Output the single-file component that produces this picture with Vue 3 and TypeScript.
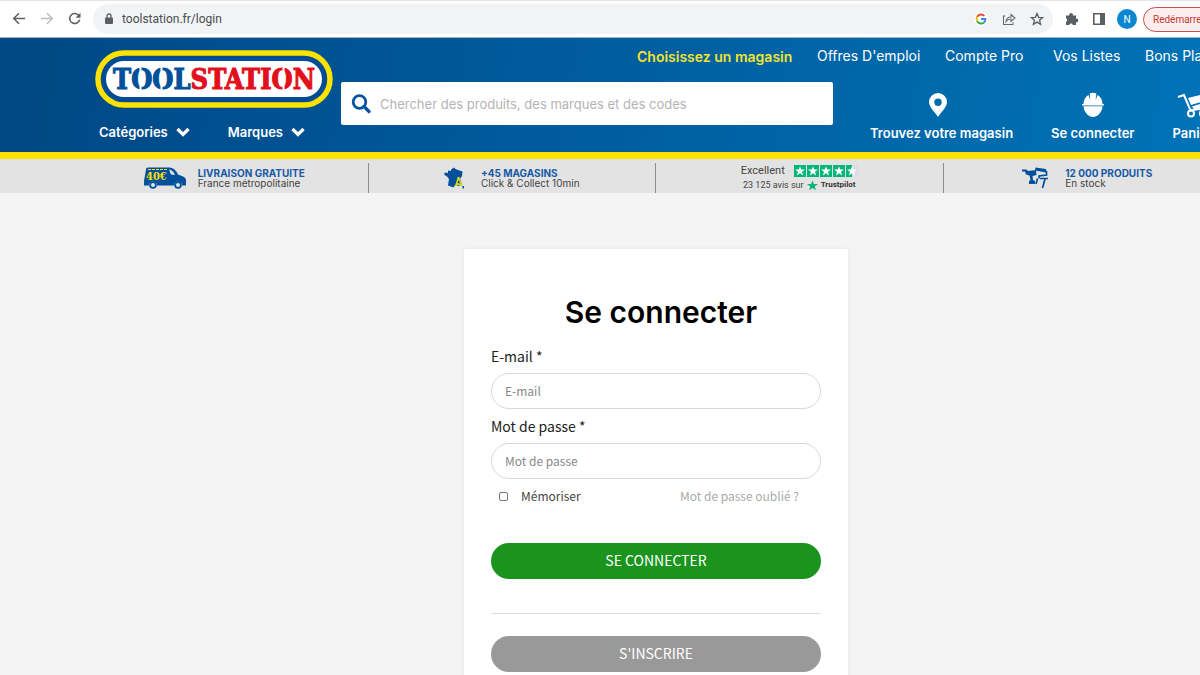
<script setup lang="ts">
import { ref } from 'vue'

const email = ref('')
const password = ref('')
const remember = ref(false)
const search = ref('')
const address = ref('toolstation.fr/login')

const quickLinks: string[] = ["Offres D'emploi", 'Compte Pro', 'Vos Listes', 'Bons Plans']
const menus: string[] = ['Catégories', 'Marques']
const stars: number[] = [0, 1, 2, 3, 4]
const starPath = 'M6 1.2 7.200 4.600H11L8 6.800 9.100 10.400 6 8.200 2.900 10.400 4 6.800 1 4.600H4.800Z'
</script>

<template>
  <div class="viewport">
    <div class="canvas">
      <div class="browser">
        <button class="tool" aria-label="Retour">
          <svg width="16" height="16" viewBox="0 0 16 16"><path d="M14 7.500H3M8 2.200 2.700 7.500 8 12.800" fill="none" stroke="#5b5e62" stroke-width="1.500" /></svg>
        </button>
        <button class="tool" aria-label="Suivant">
          <svg width="16" height="16" viewBox="0 0 16 16"><path d="M2 7.500h11M8 2.200 13.300 7.500 8 12.800" fill="none" stroke="#b9bbbe" stroke-width="1.500" /></svg>
        </button>
        <button class="tool" aria-label="Actualiser">
          <svg width="16" height="16" viewBox="0 0 16 16"><path d="M12.600 8.700A5 5 0 1 1 11.300 4L12.500 5.200" fill="none" stroke="#5b5e62" stroke-width="1.600" /><path d="M13.500 1.800V6.700H8.600Z" fill="#5b5e62" /></svg>
        </button>
        <div class="address">
          <svg class="lock" width="10" height="12" viewBox="0 0 10 12"><path d="M3 5V3a2 2 0 0 1 4 0v2" fill="none" stroke="#5b5e62" stroke-width="1.300" /><rect x="1" y="4.500" width="8" height="6.500" rx="1" fill="#5b5e62" /></svg>
          <input v-model="address" class="url" aria-label="Adresse" />
          <svg width="14" height="14" viewBox="0 0 14 14"><circle cx="7" cy="7" r="7" fill="#fff" /><g fill="none" stroke-width="2"><path d="M10.300 3.900A4.500 4.500 0 0 0 3.100 4.900" stroke="#ea4335" /><path d="M3.100 4.900A4.500 4.500 0 0 0 3.100 9.200" stroke="#fbbc05" /><path d="M3.100 9.200A4.500 4.500 0 0 0 10 10.400" stroke="#34a853" /><path d="M10 10.400A4.500 4.500 0 0 0 11.400 7H7" stroke="#4285f4" /></g></svg>
          <svg width="14" height="14" viewBox="0 0 14 14"><path d="M3.500 4H1.500v8.500h9.500V10.500M4 9.500C4.500 6.500 6.500 5 9 5V2.500L13 6 9 9.400V7C7 7 5.500 7.700 4 9.500Z" fill="none" stroke="#66696d" stroke-width="1.100" /></svg>
          <svg width="14" height="14" viewBox="0 0 14 14"><path d="m7 1.500 1.600 3.800 4.100.3-3.100 2.700 1 4L7 10.100l-3.600 2.200 1-4L1.300 5.600l4.100-.3Z" fill="none" stroke="#5b5e62" stroke-width="1.300" /></svg>
        </div>
        <div class="extensions">
          <svg width="14" height="14" viewBox="0 0 14 14"><path d="M1 3.500h3.300a1.900 1.900 0 1 1 3.600 0H11v3.200a1.800 1.800 0 1 1 0 3.500V13H7.800a1.800 1.800 0 0 0-3.500 0H1V9.700a1.800 1.800 0 0 0 0-3.400Z" fill="#5b5e62" /></svg>
          <svg width="14" height="14" viewBox="0 0 14 14"><path d="M1.800 1.800h10.400v10.400H1.800Z" fill="#fff" stroke="#5b5e62" stroke-width="1.600" /><path d="M8 1h5v12H8Z" fill="#5b5e62" /></svg>
          <button class="avatar">N</button>
          <button class="restart">Redémarrer</button>
        </div>
      </div>

      <header class="header">
        <div class="container head">
          <div class="brand">
            <a href="#" class="logo" aria-label="Toolstation">
              <svg width="238" height="58" viewBox="0 0 238 58">
                <rect x="3" y="3" width="232" height="52" rx="26" fill="#004b93" stroke="#ffe200" stroke-width="5.500" />
                <rect x="11" y="11" width="216" height="36" rx="18" fill="#fff" />
                <text x="119" y="39" text-anchor="middle" class="wordmark"><tspan fill="#00509b" stroke="#00509b">TOOL</tspan><tspan fill="#e2101c" stroke="#e2101c">STATION</tspan></text>
                <path d="M45.500 17v24M66.500 17v24M188.500 17v24" stroke="#fff" stroke-width="2" />
              </svg>
            </a>
            <nav class="menus">
              <button v-for="menu in menus" :key="menu" class="menu">
                {{ menu }}
                <svg width="14" height="10" viewBox="0 0 14 10"><path d="m1.500 2 5.500 5.500L12.500 2" fill="none" stroke="#fff" stroke-width="3.200" /></svg>
              </button>
            </nav>
          </div>
          <div class="panel">
            <nav class="links">
              <a href="#" class="store">Choisissez un magasin</a>
              <a v-for="link in quickLinks" :key="link" href="#">{{ link }}</a>
            </nav>
            <div class="lower">
              <label class="search">
                <svg width="20" height="20" viewBox="0 0 20 20"><circle cx="8.500" cy="8" r="6.300" fill="none" stroke="#0a539e" stroke-width="2.800" /><path d="m13 12.500 5 5" stroke="#0a539e" stroke-width="3.200" stroke-linecap="round" /></svg>
                <input v-model="search" type="search" aria-label="Recherche" placeholder="Chercher des produits, des marques et des codes" />
              </label>
              <nav class="actions">
                <a href="#">
                  <svg width="34" height="26" viewBox="0 0 34 26"><path d="M13 1a9 9 0 0 0-9 9c0 5 5 9 9 15 4-6 9-10 9-15a9 9 0 0 0-9-9Zm0 5.500a3.700 3.700 0 1 1 0 7.400 3.700 3.700 0 0 1 0-7.400Z" fill="#fff" /></svg>
                  Trouvez votre magasin
                </a>
                <a href="#">
                  <svg width="26" height="26" viewBox="0 0 26 26"><path d="M3.500 12C3.500 7.500 5.500 4.500 8.500 3L10.300 8 9.700 1.500Q13 .2 16.300 1.500L15.700 8 17.500 3C20.500 4.500 22.500 7.500 22.500 12L24 12.300V13.400H2V12.300ZM3.500 14.200h19C22.500 19 18 25 13 25S3.500 19 3.500 14.200Z" fill="#fff" /></svg>
                  Se connecter
                </a>
                <a href="#">
                  <svg width="30" height="26" viewBox="0 0 30 26"><path d="m1 5 6-2 6.500 15.500L29 16" fill="none" stroke="#fff" stroke-width="2" /><path d="m11 6 16-4 3 6-16 5Zm4 8.500L30 10v5l-13 2.500Z" fill="#fff" /><circle cx="14" cy="21.500" r="3" fill="none" stroke="#fff" stroke-width="2" /><circle cx="26" cy="21.500" r="3" fill="none" stroke="#fff" stroke-width="2" /></svg>
                  Panier
                </a>
              </nav>
            </div>
          </div>
        </div>
      </header>

      <section class="benefits">
        <div class="container row">
          <div class="benefit">
            <svg width="42" height="24" viewBox="0 0 42 24">
              <path d="M2 3.500Q2 1.500 4 1.500h22q5 .5 8 7l5 2q3 1 3 4v5h-4a4 4 0 0 0-8 0H13a4 4 0 0 0-8 0H0V15Z" fill="#00509b" /><path d="M25 3.500q4 .5 6 5.500l-4-.5Z" fill="#e3e3e3" />
              <circle cx="9" cy="19" r="2.900" fill="#e3e3e3" stroke="#00509b" stroke-width="1.800" /><circle cx="34" cy="19" r="2.900" fill="#e3e3e3" stroke="#00509b" stroke-width="1.800" />
              <path d="M4 3.500h19" stroke="#ffe200" stroke-width="1.200" stroke-dasharray="3 1" /><text x="2" y="14" class="amount">40€</text>
            </svg>
            <p><strong>LIVRAISON GRATUITE</strong>France métropolitaine</p>
          </div>
          <div class="benefit wide">
            <svg width="20" height="24" viewBox="0 0 20 24"><path d="M10 1.500 11.500 3l2.500 1 4.500 1.500-.5 4.500-2 3 1 1.500.5 4-3 1.500-3.500-1-1.500 2.500-5.500-2L5 13 3 10.500 0 8.500 1 6.500l3 .5V4.500L7 5V3.500Z" fill="#00509b" /><path d="M14.500 11 12 19.500m2.500-8.500 2 5.500L18 20m-5-2.500 5 1.500M11 20l3-2" fill="none" stroke="#d3d51c" stroke-width="1.700" /><path d="M18.500 20H20v2.500h-1.500Z" fill="#00509b" /></svg>
            <p><strong>+45 MAGASINS</strong>Click &amp; Collect 10min</p>
          </div>
          <div class="benefit reviews">
            <div class="rating">
              <span>Excellent</span>
              <span class="stars">
                <svg v-for="star in stars" :key="star" width="12" height="12" viewBox="0 0 12 12">
                  <rect width="12" height="12" fill="#dcdce6" /><rect :width="star === 4 ? 6 : 12" height="12" fill="#00b67a" /><path :d="starPath" fill="#fff" />
                </svg>
              </span>
            </div>
            <div class="source">
              <span>23 125 avis sur</span>
              <svg width="11" height="11" viewBox="1 1 10 10"><path :d="starPath" fill="#00b67a" /></svg>
              <b>Trustpilot</b>
            </div>
          </div>
          <div class="benefit wide">
            <svg width="26" height="24" viewBox="0 0 26 24"><path d="M0 3.500h4.500L6 5l8-1 .5 5-4 1 .5 4 2 1v3H7v-3l1.500-1L7.500 9.500 4 8.500 3 5.500H0ZM13.500 1.500 24 3l.5 3.500L13 4.500Z" fill="#00509b" /><path d="M24.500 5v4L17 10v2.500M15.500 12.500 14 18m4-5.500h8m-3 .5-2.500 9" fill="none" stroke="#00509b" stroke-width="1.700" /></svg>
            <p><strong>12 000 PRODUITS</strong>En stock</p>
          </div>
        </div>
      </section>

      <main class="main">
        <form class="card" @submit.prevent>
          <h1>Se connecter</h1>
          <label for="email" class="field">E-mail *</label>
          <input id="email" v-model="email" class="box" type="email" placeholder="E-mail" />
          <label for="password" class="field">Mot de passe *</label>
          <input id="password" v-model="password" class="box" type="password" placeholder="Mot de passe" />
          <div class="options">
            <label class="remember"><input v-model="remember" type="checkbox" />Mémoriser</label>
            <a href="#">Mot de passe oublié ?</a>
          </div>
          <button type="submit" class="submit">SE CONNECTER</button>
          <hr />
          <button type="button" class="submit register">S'INSCRIRE</button>
        </form>
      </main>
    </div>
  </div>
</template>

<style>
html,
body,
#app {
  height: 100%;
}
body {
  margin: 0;
  overflow: hidden;
  background: #f4f4f4;
}
</style>

<style scoped>
.viewport {
  overflow: hidden;
  min-height: 100%;
  font-family: Inter, "Open Sans", sans-serif;
}
.canvas {
  width: calc(100% + 112px);
}
button,
input {
  box-sizing: border-box;
  margin: 0;
  padding: 0;
  border: 0;
  background: none;
  font: inherit;
  color: inherit;
}
input:focus {
  outline: none;
}
a {
  color: inherit;
  text-decoration: none;
}
svg {
  display: block;
  flex: none;
}

/* Browser toolbar */
.browser {
  display: flex;
  align-items: center;
  box-sizing: border-box;
  height: 38px;
  padding-left: 5px;
  border-top: 1px solid #e3e5e9;
  border-bottom: 1px solid #9fb4c6;
  background: #fff;
  font-family: Roboto, "Open Sans", sans-serif;
  font-size: 12px;
}
.tool {
  display: grid;
  place-items: center;
  width: 28px;
  height: 28px;
}
.address {
  display: flex;
  flex: 1;
  align-items: center;
  gap: 14px;
  height: 30px;
  margin-left: 4px;
  padding: 0 9px 0 11px;
  border-radius: 15px;
  background: #f1f3f4;
  color: #4a4d51;
}
.lock {
  margin-right: -6px;
}
.url {
  flex: 1;
}
.extensions {
  display: flex;
  align-items: center;
  gap: 13px;
  width: 247px;
  padding-left: 12px;
}
.avatar {
  width: 20px;
  height: 20px;
  margin: 0 -7px 0 -2px;
  border-radius: 50%;
  background: #0b87d1;
  color: #fff;
  font-size: 10px;
}
.restart {
  width: 150px;
  height: 25px;
  padding-left: 9px;
  border: 1px solid #c9504b;
  border-radius: 13px;
  background: #fceeee;
  color: #c5352e;
  font-size: 10px;
  text-align: left;
}

/* Site header */
.header {
  border-bottom: 7px solid #ffe200;
  background: linear-gradient(100deg, #004784 0%, #005596 30%, #0069ab 70%, #0076ba 100%);
  color: #fff;
}
.container {
  box-sizing: border-box;
  max-width: 1150px;
  margin: 0 auto;
}
.head {
  display: flex;
  gap: 8px;
  height: 114px;
  padding: 0 14px;
}
.brand {
  width: 238px;
  padding-top: 12px;
}
.wordmark {
  font-family: "DejaVu Serif Condensed", "DejaVu Serif", serif;
  font-size: 27px;
  font-weight: 700;
  stroke-width: 1;
}
.menus {
  display: flex;
  gap: 38px;
  padding: 14px 4px;
}
.menu {
  display: flex;
  align-items: center;
  gap: 8px;
  font-size: 13px;
  font-weight: 600;
  line-height: 20px;
}
.panel {
  flex: 1;
}
.links {
  display: grid;
  grid-template-columns: 180px 128px 108px 92px 1fr;
  align-items: center;
  padding: 6px 0 0 296px;
  font-size: 14px;
  line-height: 20px;
  white-space: nowrap;
}
.store {
  padding-top: 3px;
  color: #f3e52c;
  font-weight: 600;
}
.lower {
  display: flex;
  align-items: flex-start;
  padding-top: 15px;
}
.search {
  display: flex;
  flex: 1;
  align-items: center;
  gap: 9px;
  height: 43px;
  padding: 0 10px;
  border-radius: 2px;
  background: #fff;
  color: #333;
}
.search input {
  flex: 1;
  height: 40px;
  font-size: 13px;
}
.search input::placeholder {
  color: #b4b4b4;
  opacity: 1;
}
.actions {
  display: flex;
  gap: 38px;
  width: 348px;
  margin-left: 37px;
  padding-top: 10px;
  font-size: 13px;
  font-weight: 600;
  line-height: 20px;
  white-space: nowrap;
}
.actions a {
  display: flex;
  flex-direction: column;
  align-items: center;
  gap: 5px;
}

/* Benefits strip */
.benefits {
  background: #e3e3e3;
}
.row {
  display: grid;
  grid-template-columns: repeat(4, 1fr);
  padding-top: 4px;
}
.benefit {
  display: flex;
  align-items: center;
  justify-content: center;
  gap: 12px;
  height: 30px;
  border-right: 1px solid #8d8d8d;
  color: #444;
  font-size: 10px;
  line-height: 10px;
}
.benefit:last-child {
  border-right: 0;
}
.wide {
  gap: 17px;
}
.benefit p {
  margin: 0;
}
.benefit strong {
  display: block;
  color: #1659a8;
  font-weight: 700;
}
.amount {
  fill: #ffe200;
  font-family: "DejaVu Serif Condensed", serif;
  font-size: 11px;
  font-weight: 700;
}
.reviews {
  flex-direction: column;
  gap: 2px;
  font-family: Roboto, sans-serif;
  font-size: 9px;
}
.rating,
.source {
  display: flex;
  align-items: center;
  line-height: 12px;
}
.rating {
  gap: 9px;
  font-size: 11px;
}
.stars {
  display: flex;
  gap: 1px;
}
.source {
  gap: 3px;
}
.source b {
  color: #333;
  font-size: 8px;
}

/* Login card */
.main {
  padding-top: 56px;
  font-family: "Noto Sans CJK JP", "Noto Sans", sans-serif;
}
.card {
  display: flex;
  flex-direction: column;
  box-sizing: border-box;
  max-width: 384px;
  margin: 0 auto;
  padding: 43px 27px;
  background: #fff;
  box-shadow: 0 0 4px #e6e6e6;
}
h1 {
  margin: 0 0 12px;
  padding-left: 10px;
  color: #000;
  font-family: Inter, sans-serif;
  font-size: 30px;
  font-weight: 600;
  line-height: 40px;
  text-align: center;
}
.field {
  color: #222;
  font-size: 14px;
  line-height: 24px;
}
.box {
  width: 100%;
  height: 36px;
  margin: 5px 0;
  padding: 0 13px 1px;
  border: 1px solid #d9d9d9;
  border-radius: 18px;
  color: #333;
  font-size: 12px;
}
.box::placeholder {
  color: #888;
  opacity: 1;
}
.options {
  display: flex;
  justify-content: space-between;
  padding: 0 22px 0 8px;
  color: #444;
  font-size: 12px;
  line-height: 24px;
}
.options a {
  color: #aaa;
}
.remember {
  display: flex;
  align-items: center;
  gap: 13px;
}
.remember input {
  appearance: none;
  width: 9px;
  height: 9px;
  border: 1px solid #777;
  border-radius: 2px;
}
.remember input:checked {
  background: #1a941c;
}
.submit {
  height: 36px;
  margin-top: 35px;
  padding-bottom: 2px;
  border-radius: 18px;
  background: #1a941c;
  color: #fff;
  font-size: 14px;
}
hr {
  width: 100%;
  height: 1px;
  margin: 34px 0 22px;
  border: 0;
  background: #ddd;
}
.register {
  margin-top: 0;
  background: #999;
}
</style>
